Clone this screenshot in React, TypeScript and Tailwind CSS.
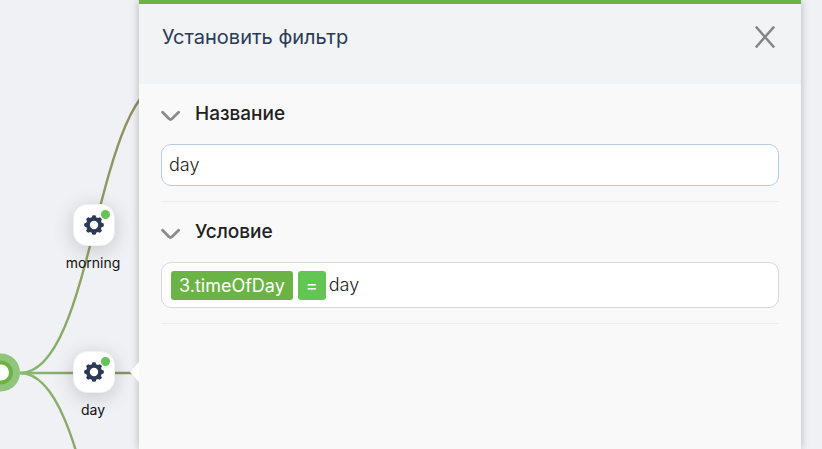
import React, { useState } from "react";

const GearIcon: React.FC = () => (
  <svg viewBox="-10 -10 20 20" className="size-5" aria-hidden="true">
    {[0, 45, 90, 135, 180, 225, 270, 315].map((angle) => (
      <rect
        key={angle}
        x="-2"
        y="-9.8"
        width="4"
        height="5"
        rx="1.4"
        fill="#2b3a57"
        transform={`rotate(${angle})`}
      />
    ))}
    <circle r="6.1" fill="none" stroke="#2b3a57" strokeWidth="3.8" />
  </svg>
);

const FlowNode: React.FC<{ label: string; className: string }> = ({
  label,
  className,
}) => (
  <div className={`absolute flex w-20 flex-col items-center ${className}`}>
    <button
      type="button"
      aria-label={label}
      className="relative flex size-[42px] items-center justify-center rounded-[14px] border border-[#f0f1f4] bg-white shadow-[0_4px_20px_rgba(0,0,0,0.18)]"
    >
      <GearIcon />
      <span className="absolute right-1 top-[5px] size-[9px] rounded-full bg-[#62c554]" />
    </button>
    <span className="mt-[7px] pr-[2px] text-sm leading-5 text-[#111111]">
      {label}
    </span>
  </div>
);

const FlowCanvas: React.FC = () => (
  <div className="absolute inset-0 overflow-hidden">
    <svg
      width="180"
      height="670"
      className="absolute left-0 top-0"
      fill="none"
      strokeWidth="2.4"
      aria-hidden="true"
    >
      <defs>
        <linearGradient
          id="edge"
          gradientUnits="userSpaceOnUse"
          x1="20"
          y1="0"
          x2="150"
          y2="0"
        >
          <stop offset="0" stopColor="#86bb70" />
          <stop offset="1" stopColor="#91885a" />
        </linearGradient>
      </defs>
      <path d="M20 373C95 373 95 80 170 80" stroke="url(#edge)" />
      <path d="M20 373H170" stroke="url(#edge)" />
      <path d="M20 373C95 373 95 668 170 668" stroke="url(#edge)" />
      <circle cx="1" cy="372.5" r="19" fill="#92c57c" />
      <circle cx="1" cy="372.5" r="10" fill="#ffffff" stroke="#6cb346" strokeWidth="4" />
    </svg>
    <FlowNode label="morning" className="left-[54px] top-[204px]" />
    <FlowNode label="day" className="left-[54px] top-[351px]" />
  </div>
);

const Section: React.FC<{
  title: string;
  htmlFor: string;
  children: React.ReactNode;
}> = ({ title, htmlFor, children }) => {
  const [open, setOpen] = useState(true);

  return (
    <section className="border-b border-[#ededee] pb-[15px] pt-4">
      <div className="flex items-center gap-[14px]">
        <button
          type="button"
          aria-label={title}
          aria-expanded={open}
          onClick={() => setOpen(!open)}
          className="pt-1"
        >
          <svg
            viewBox="0 0 20 12"
            className={`h-3 w-5 ${open ? "" : "-rotate-90"}`}
            fill="none"
            stroke="#8b8b8b"
            strokeWidth="2.8"
            strokeLinecap="round"
            strokeLinejoin="round"
            aria-hidden="true"
          >
            <path d="M1.6 2.2L8 8.8Q9.5 10.2 11 8.8L17.6 2.2" />
          </svg>
        </button>
        <label
          htmlFor={htmlFor}
          className="text-[19px] font-medium leading-7 text-[#212121]"
        >
          {title}
        </label>
      </div>
      {open && <div className="mt-4">{children}</div>}
    </section>
  );
};

export default function App() {
  const [name, setName] = useState("day");
  const [value, setValue] = useState("day");

  return (
    <main className="relative flex min-h-screen bg-[#eff1f5] pl-[139px] pr-[21px] font-['Inter','Liberation_Sans',sans-serif]">
      <FlowCanvas />
      <div className="relative flex-1 border-t-4 border-[#6cb346] bg-[#f9f9f9] shadow-[0_0_8px_rgba(0,0,0,0.25)]">
        <span className="absolute -left-[9px] top-[358px] h-5 w-[9px] bg-white [clip-path:polygon(100%_0,100%_100%,0_50%)]" />
        <header className="flex h-20 items-start justify-between bg-[#f1f3f5] pl-[23px] pr-[26px] pt-[19px]">
          <h1 className="text-xl leading-7 text-[#2b3a57]">
            Установить фильтр
          </h1>
          <button type="button" aria-label="Закрыть" className="pt-[3px]">
            <svg
              viewBox="0 0 20 22"
              className="h-[22px] w-5"
              fill="none"
              stroke="#858585"
              strokeWidth="2.5"
              aria-hidden="true"
            >
              <path d="M.8 .6L19.2 21.4M19.2 .6L.8 21.4" />
            </svg>
          </button>
        </header>

        <form
          className="px-[22px]"
          onSubmit={(event) => event.preventDefault()}
        >
          <Section title="Название" htmlFor="filter-name">
            <input
              id="filter-name"
              value={name}
              onChange={(event) => setName(event.target.value)}
              className="block h-[42px] w-full rounded-[10px] border border-[#b5cee3] bg-white px-[7px] pb-[2px] text-lg font-light text-[#212121] outline-none"
            />
          </Section>
          <Section title="Условие" htmlFor="filter-value">
            <div className="flex h-[46px] items-center rounded-[10px] border border-[#d8d8d8] bg-white px-[9px] text-lg">
              <span className="mr-[5px] rounded-[3px] bg-[#6cb346] px-2 leading-[29px] text-white">
                3.timeOfDay
              </span>
              <span className="mr-[3px] rounded-[3px] bg-[#62c554] px-2 leading-[29px] text-white">
                =
              </span>
              <input
                id="filter-value"
                value={value}
                onChange={(event) => setValue(event.target.value)}
                className="min-w-0 flex-1 bg-transparent font-light text-[#212121] outline-none"
              />
            </div>
          </Section>
        </form>
      </div>
    </main>
  );
}
